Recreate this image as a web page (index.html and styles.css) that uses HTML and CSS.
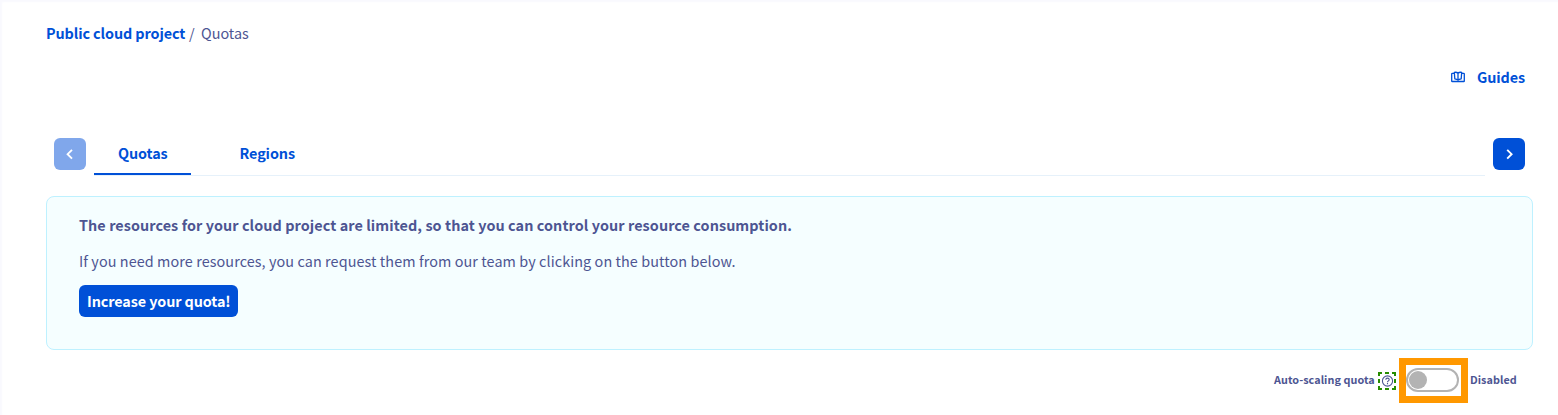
FILE: index.html
```html
<!DOCTYPE html>
<html lang="en">
<head>
<meta charset="utf-8">
<title>Quotas</title>
<link rel="stylesheet" href="styles.css">
</head>
<body>
<main class="page">
  <nav class="breadcrumb"><a class="crumb-link">Public cloud project</a><span class="crumb-sep">/</span><span class="crumb-current">Quotas</span></nav>
  <div class="guides">
    <svg class="guides-icon" width="14" height="12" viewBox="0 0 14 12" fill="none" stroke="currentColor" stroke-width="1.3" stroke-linejoin="round"><path d="M3.500 2.400H1.300Q.7 2.400.7 3V9.900Q.7 10.500 1.300 10.500H12.700Q13.300 10.500 13.300 9.900V3Q13.300 2.400 12.700 2.400H10.500"/><path d="M7 2.400C6.300 1.400 5 1.100 3.300 1.300L3.800 7.800Q6 8 7 9.200 8 8 10.200 7.800L10.700 1.300C9 1.100 7.700 1.400 7 2.400V9.200"/></svg>
    <span class="guides-label">Guides</span>
  </div>
  <div class="tabs">
    <button class="arrow arrow-off"><svg width="32" height="32" viewBox="0 0 32 32" fill="none" stroke="#fff" stroke-width="1.9"><path d="M18 11.800 13.600 16.200 18 20.600"/></svg></button>
    <div class="tab-list">
      <a class="tab tab-active">Quotas</a>
      <a class="tab tab-second">Regions</a>
    </div>
    <button class="arrow"><svg width="32" height="32" viewBox="0 0 32 32" fill="none" stroke="#fff" stroke-width="1.9"><path d="M14.200 11.800 18.600 16.200 14.200 20.600"/></svg></button>
  </div>
  <section class="notice">
    <p class="notice-title">The resources for your cloud project are limited, so that you can control your resource consumption.</p>
    <p class="notice-text">If you need more resources, you can request them from our team by clicking on the button below.</p>
    <button class="increase">Increase your quota!</button>
  </section>
  <div class="autoscale">
    <span class="auto-label">Auto-scaling quota</span>
    <svg class="help" width="18" height="18" viewBox="0 0 18 18" fill="none"><path d="M0 1h4M7 1h4M14 1h4M0 17h4M7 17h4M14 17h4M1 0v4M1 7v4M1 14v4M17 0v4M17 7v4M17 14v4" stroke="#268c00" stroke-width="2"/><circle cx="9.500" cy="9" r="5.100" stroke="#4d5592" stroke-width="1.100"/><path d="M7.800 7.800c0-2.200 3.400-2.200 3.400 0 0 1.200-1.700 1-1.700 2.400M9.500 11v1.200" stroke="#4d5592" stroke-width="1.100"/></svg>
    <span class="highlight"><span class="toggle"><span class="knob"></span></span></span>
    <span class="auto-state">Disabled</span>
  </div>
</main>
</body>
</html>
```
FILE: styles.css
```css
* { box-sizing: border-box; }
body {
  margin: 0;
  background: #fff;
  color: #4d5592;
  font: 14.4px/24px "Noto Sans CJK SC", "Noto Sans", sans-serif;
}
.page {
  height: 415px;
  padding: 21px 25px 0 46px;
  overflow: hidden;
  box-shadow: inset 2px 2px 2px #f9f9fe;
}
.breadcrumb { display: flex; height: 24px; }
.crumb-link {
  width: 143px;
  color: #0050d7;
  font-weight: 700;
  letter-spacing: -0.1px;
  white-space: nowrap;
}
.crumb-sep { width: 12px; }
.guides {
  display: flex;
  align-items: center;
  justify-content: flex-end;
  gap: 12px;
  height: 24px;
  margin: 20px 8px 0 0;
  color: #0050d7;
  font-weight: 700;
  letter-spacing: -0.1px;
}
.guides-label { width: 48px; }
.tabs { display: flex; margin: 49px 8px 0; height: 38px; }
.arrow {
  flex: none;
  width: 32px;
  height: 32px;
  padding: 0;
  border: 0;
  border-radius: 6px;
  background: #0050d7;
}
.arrow svg { display: block; }
.arrow-off { background: #80a7eb; }
.tab-list {
  display: flex;
  flex: 1;
  margin: 0 8px;
  border-bottom: 1px solid #e6f1fa;
}
.tab {
  height: 37px;
  padding: 3px 24px;
  color: #0050d7;
  font-weight: 700;
  letter-spacing: -0.1px;
  white-space: nowrap;
}
.tab-active { width: 97px; border-bottom: 2px solid #0050d7; }
.tab-second { margin-left: 24.5px; }
.notice {
  height: 154px;
  margin-top: 20px;
  padding: 16px 32px 0;
  border: 1px solid #bef1ff;
  border-radius: 8px;
  background: #f5feff;
}
.notice p { margin: 0 0 12px; }
.notice-title { font-weight: 700; letter-spacing: 0.075px; }
.notice-text { letter-spacing: 0.082px; }
.increase {
  display: block;
  width: 159px;
  height: 32px;
  padding: 0 0 0 8px;
  border: 0;
  border-radius: 6px;
  background: #0050d7;
  color: #fff;
  font: inherit;
  font-weight: 700;
  line-height: 32px;
  letter-spacing: -0.1px;
  text-align: left;
  white-space: nowrap;
}
.autoscale {
  display: flex;
  align-items: flex-start;
  justify-content: flex-end;
  height: 45px;
  margin: 8px 13px 0 0;
  font-size: 10.8px;
  font-weight: 700;
  letter-spacing: 0.06px;
  white-space: nowrap;
}
.auto-label { width: 104px; margin-top: 9px; }
.help { flex: none; margin-top: 14px; }
.highlight {
  display: flex;
  align-items: flex-start;
  width: 69px;
  height: 45px;
  padding-top: 3px;
  margin: 0 2px 0 3px;
  border: 7px solid #ff9800;
}
.toggle {
  display: flex;
  align-items: center;
  width: 53px;
  height: 24px;
  padding-left: 1px;
  border: 2px solid #b3b3b3;
  border-radius: 12px;
}
.knob { width: 18px; height: 18px; border-radius: 50%; background: #b3b3b3; }
.auto-state { width: 50px; margin-top: 9px; }
```
